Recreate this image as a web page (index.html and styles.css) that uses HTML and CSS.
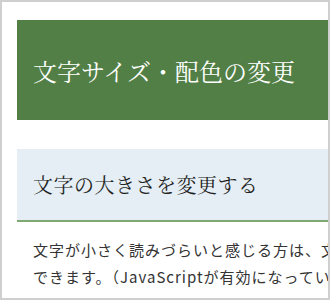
FILE: index.html
```html
<!DOCTYPE html>
<html lang="ja">
<head>
<meta charset="utf-8">
<title>文字サイズ・配色の変更</title>
<link rel="stylesheet" href="styles.css">
</head>
<body>
<div class="frame">
  <div class="content">
    <h1 class="page-title">文字サイズ・配色の変更</h1>
    <h2 class="section-title">文字の大きさを変更する</h2>
    <p class="text">文字が小さく読みづらいと感じる方は、文字の大きさを変更<br>できます。（JavaScriptが有効になっている場合）</p>
  </div>
</div>
</body>
</html>
```

FILE: styles.css
```css
html, body {
  margin: 0;
  padding: 0;
  background: #ffffff;
}
.frame {
  box-sizing: border-box;
  width: 330px;
  height: 300px;
  border: 2px solid #cfcfcf;
  overflow: hidden;
  background: #ffffff;
}
.content {
  width: 400px;
  padding: 18px 0 0 15px;
}
.page-title {
  margin: 0;
  height: 100px;
  display: flex;
  align-items: center;
  padding-left: 16px;
  background: #527f46;
  color: #ffffff;
  font-family: "Noto Serif CJK JP", "Liberation Serif", "Noto Sans CJK JP", serif;
  font-size: 24px;
  font-weight: normal;
  letter-spacing: 0;
}
.section-title {
  margin: 29px 0 0 0;
  height: 71px;
  display: flex;
  align-items: center;
  padding-left: 16px;
  background: #e5eef4;
  border-bottom: 2px solid #7fa970;
  color: #222222;
  font-family: "Noto Serif CJK JP", "Liberation Serif", "Noto Sans CJK JP", serif;
  font-size: 20px;
  font-weight: normal;
  letter-spacing: 0.5px;
}
.text {
  margin: 14px 0 0 0;
  padding-left: 16px;
  color: #333333;
  font-family: "Noto Sans CJK JP", "Noto Sans", sans-serif;
  font-size: 15px;
  line-height: 27px;
  letter-spacing: 1px;
  white-space: nowrap;
}
```
